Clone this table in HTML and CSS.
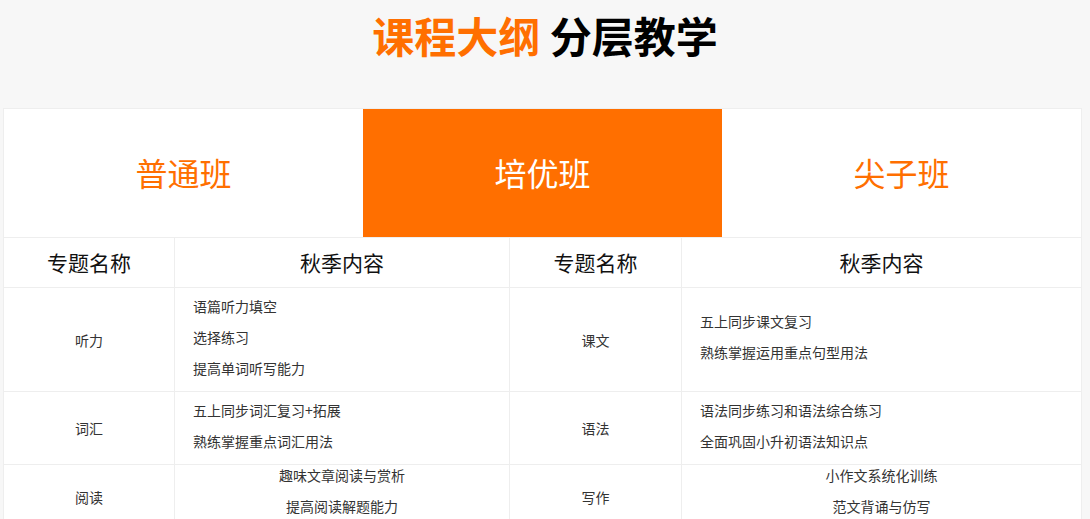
FILE: index.html
```html
<!DOCTYPE html>
<html lang="zh-CN">
<head>
<meta charset="utf-8">
<title>课程大纲 分层教学</title>
<link rel="stylesheet" href="styles.css">
</head>
<body>
<h1 class="title"><span class="accent">课程大纲</span> 分层教学</h1>
<div class="panel">
  <div class="tabs">
    <div class="tab">普通班</div>
    <div class="tab active">培优班</div>
    <div class="tab">尖子班</div>
  </div>
  <div class="grid">
    <div class="cell head">专题名称</div>
    <div class="cell head">秋季内容</div>
    <div class="cell head">专题名称</div>
    <div class="cell head">秋季内容</div>

    <div class="cell label r1">听力</div>
    <div class="cell content r1"><p>语篇听力填空</p><p>选择练习</p><p>提高单词听写能力</p></div>
    <div class="cell label r1">课文</div>
    <div class="cell content r1"><p>五上同步课文复习</p><p>熟练掌握运用重点句型用法</p></div>

    <div class="cell label r2">词汇</div>
    <div class="cell content r2"><p>五上同步词汇复习+拓展</p><p>熟练掌握重点词汇用法</p></div>
    <div class="cell label r2">语法</div>
    <div class="cell content r2"><p>语法同步练习和语法综合练习</p><p>全面巩固小升初语法知识点</p></div>

    <div class="cell label r3">阅读</div>
    <div class="cell content r3 centered"><p>趣味文章阅读与赏析</p><p>提高阅读解题能力</p></div>
    <div class="cell label r3">写作</div>
    <div class="cell content r3 centered"><p>小作文系统化训练</p><p>范文背诵与仿写</p></div>
  </div>
</div>
</body>
</html>
```

FILE: styles.css
```css
html, body {
  margin: 0;
  padding: 0;
  background: #f7f7f7;
  font-family: "Noto Sans CJK SC", "Noto Sans", sans-serif;
}
.title {
  margin: 0;
  height: 108px;
  box-sizing: border-box;
  padding-top: 7px;
  text-align: center;
  font-size: 42px;
  line-height: 56px;
  font-weight: 700;
  color: #000;
  letter-spacing: 0;
}
.accent {
  color: #ff6f00;
}
.panel {
  margin-left: 3px;
  width: 1079px;
  background: #fff;
  border-top: 1px solid #eeeeee;
  border-left: 1px solid #eeeeee;
  border-right: 1px solid #eeeeee;
  box-sizing: border-box;
}
.tabs {
  display: grid;
  grid-template-columns: 359px 359px 1fr;
  height: 128px;
  border-bottom: 1px solid #eeeeee;
}
.tab {
  display: flex;
  align-items: center;
  justify-content: center;
  font-size: 32px;
  color: #ff6f00;
  padding-bottom: 3px;
}
.tab.active {
  background: #ff6f00;
  color: #fff;
}
.grid {
  display: grid;
  grid-template-columns: 171px 335px 172px 1fr;
  grid-template-rows: 50px 104px 73px 64px;
}
.cell {
  border-right: 1px solid #eeeeee;
  border-bottom: 1px solid #eeeeee;
  box-sizing: border-box;
  color: #333;
}
.cell:nth-child(4n) {
  border-right: none;
}
.head {
  display: flex;
  align-items: center;
  justify-content: center;
  font-size: 21px;
  color: #111;
  padding-bottom: 2px;
}
.label {
  display: flex;
  align-items: center;
  justify-content: center;
  font-size: 14px;
}
.content {
  display: flex;
  flex-direction: column;
  justify-content: center;
  padding: 0 0 6px 18px;
  font-size: 14px;
}
.content p {
  margin: 0;
  line-height: 20px;
}
.content p + p {
  margin-top: 11px;
}
.content.r3 {
  justify-content: flex-start;
  padding-bottom: 0;
}
.content.centered {
  align-items: center;
  padding-left: 0;
}
```
